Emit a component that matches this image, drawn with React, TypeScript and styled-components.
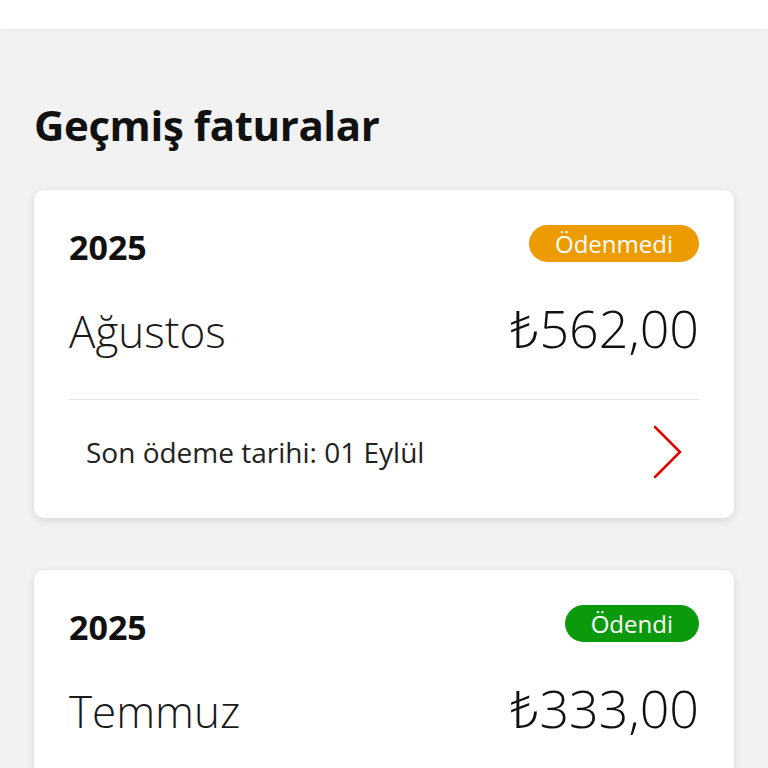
import styled, { createGlobalStyle } from "styled-components";

type Bill = {
  year: string;
  month: string;
  amount: string;
  paid: boolean;
  due?: string;
};

const bills: Bill[] = [
  { year: "2025", month: "Ağustos", amount: "₺562,00", paid: false, due: "Son ödeme tarihi: 01 Eylül" },
  { year: "2025", month: "Temmuz", amount: "₺333,00", paid: true, due: "Ödeme tarihi: 01 Ağustos" },
];

const GlobalStyle = createGlobalStyle`
  body {
    margin: 0;
    background: #f2f2f2;
    font-family: "Open Sans", "Noto Sans", sans-serif;
    color: #1a1a1a;
  }
`;

const Page = styled.div`
  height: 768px;
  overflow: hidden;
`;

const TopBar = styled.div`
  height: 29px;
  background: #ffffff;
  box-shadow: 0 1px 3px rgba(0, 0, 0, 0.04);
`;

const Content = styled.main`
  padding: 0 34px;
  display: flex;
  flex-direction: column;
  gap: 52px;
`;

const Title = styled.h1`
  margin: 66px 0 -17px 0;
  font-size: 42px;
  font-weight: 700;
  line-height: 60px;
  color: #111;
  letter-spacing: -0.4px;
`;

const Card = styled.section`
  background: #ffffff;
  border-radius: 10px;
  box-shadow: 0 2px 8px rgba(0, 0, 0, 0.12);
  padding: 35px 35px 0;
`;

const Row = styled.div`
  display: flex;
  align-items: center;
  justify-content: space-between;
`;

const Year = styled.div`
  font-size: 34px;
  font-weight: 700;
  color: #111;
  margin-top: -2px;
`;

const Badge = styled.span<{ $paid: boolean }>`
  height: 37px;
  padding: 0 26px;
  margin-bottom: 8px;
  border-radius: 19px;
  display: flex;
  align-items: center;
  background: ${(p) => (p.$paid ? "#0b9a0b" : "#ec9b00")};
  color: #fff;
  font-size: 24px;
  font-weight: 400;
`;

const Month = styled.div`
  font-size: 44px;
  font-weight: 300;
  color: #1a1a1a;
`;

const Amount = styled.div`
  font-size: 52px;
  font-weight: 300;
  color: #111;
`;

const AmountRow = styled.div`
  display: flex;
  align-items: baseline;
  justify-content: space-between;
  margin-top: 22px;
  padding-bottom: 36px;
  border-bottom: 1px solid #e6e6e6;
`;

const Footer = styled.div`
  display: flex;
  align-items: center;
  justify-content: space-between;
  height: 104px;
  padding: 0 16px 14px 17px;
  font-size: 28px;
  font-weight: 400;
  color: #222;
`;

const Chevron = () => (
  <svg width="30" height="54" viewBox="0 0 30 54" fill="none">
    <path d="M2 2 L27 27 L2 52" stroke="#e60000" strokeWidth="2.5" strokeLinecap="round" strokeLinejoin="miter" />
  </svg>
);

const App = () => {
  return (
    <Page>
      <GlobalStyle />
      <TopBar />
      <Content>
        <Title>Geçmiş faturalar</Title>
        {bills.map((b) => (
          <Card key={b.month}>
            <Row>
              <Year>{b.year}</Year>
              <Badge $paid={b.paid}>{b.paid ? "Ödendi" : "Ödenmedi"}</Badge>
            </Row>
            <AmountRow>
              <Month>{b.month}</Month>
              <Amount>{b.amount}</Amount>
            </AmountRow>
            <Footer>
              <span>{b.due}</span>
              <Chevron />
            </Footer>
          </Card>
        ))}
      </Content>
    </Page>
  );
};

export default App;
